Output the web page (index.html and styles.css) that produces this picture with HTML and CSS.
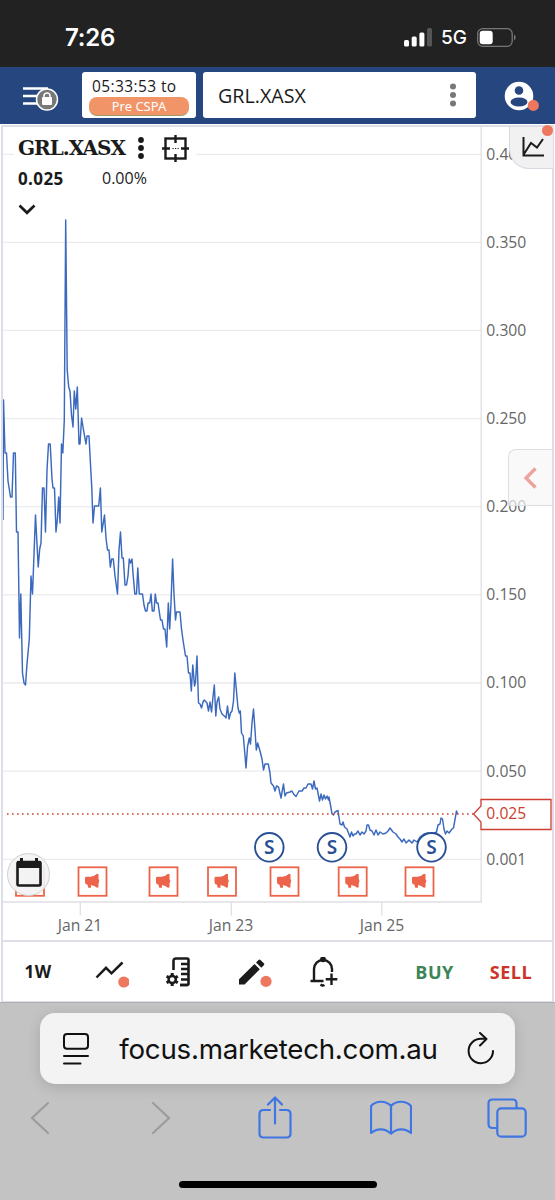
FILE: index.html
```
<!DOCTYPE html>
<html lang="en">
<head>
  <meta charset="utf-8">
  <title>GRL.XASX</title>
  <link rel="stylesheet" href="styles.css">
</head>
<body>
  <div class="phone">
    <div class="status-bar">
      <span class="clock">7:26</span>
      <div class="status-right">
        <svg width="29" height="19" viewBox="0 0 29 19">
          <rect x="0" y="12" width="5" height="6.500" rx="1.500" fill="#fff"/>
          <rect x="7.700" y="8.500" width="5" height="10" rx="1.500" fill="#fff"/>
          <rect x="15.400" y="4.500" width="5" height="14" rx="1.500" fill="#fff"/>
          <rect x="23" y="0" width="5" height="18.500" rx="1.500" fill="#555"/>
        </svg>
        <span class="network">5G</span>
        <svg class="battery" width="40" height="19" viewBox="0 0 40 19">
          <rect x=".7" y=".7" width="34.500" height="17.600" rx="5" fill="none" stroke="#777" stroke-width="1.300"/>
          <rect x="2.700" y="2.700" width="13" height="13.600" rx="3" fill="#fff"/>
          <path d="M37 6.500a3.500 3.500 0 0 1 0 6z" fill="#777"/>
        </svg>
      </div>
    </div>

    <div class="header">
      <svg class="menu" width="38" height="28" viewBox="0 0 38 28">
        <path d="M1 4.500h25M1 12h18M1 19.500h18" stroke="#fff" stroke-width="2.400"/>
        <circle cx="25" cy="15.500" r="10.500" fill="#77787a" stroke="#fff" stroke-width="1.500"/>
        <rect x="20" y="13" width="10" height="8" rx="1" fill="#fff"/>
        <path d="M22 13.500V12a3 3 0 0 1 6 0v1.500" fill="none" stroke="#fff" stroke-width="1.500"/>
      </svg>
      <div class="session">
        <span class="countdown">05:33:53 to</span>
        <span class="phase">Pre CSPA</span>
      </div>
      <div class="search">
        <span>GRL.XASX</span>
        <svg width="6" height="24" viewBox="0 0 6 24" fill="#77787a">
          <circle cx="3" cy="3.500" r="3"/><circle cx="3" cy="12" r="3"/><circle cx="3" cy="20.500" r="3"/>
        </svg>
      </div>
      <svg class="account" width="36" height="32" viewBox="0 0 36 32">
        <circle cx="15" cy="17" r="14.300" fill="#fff"/>
        <circle cx="15" cy="11.500" r="4.300" fill="#25467f"/>
        <ellipse cx="15" cy="23" rx="8.500" ry="4.600" fill="#25467f"/>
        <circle cx="29.300" cy="26.400" r="5.600" fill="#ee775f"/>
      </svg>
    </div>

    <div class="panel">
      <div class="chart">
        <svg class="plot" width="549" height="813" viewBox="3 127 549 813">
          <defs>
            <g id="news">
              <rect x="-14" y="-14" width="28" height="28.500" fill="#fff" stroke="#ec654b" stroke-width="1.800"/>
              <path d="M-7.500-3.500Q-7.500-4.500-6-4.500H-2Q2-5 4.500-7.500L6-7V-2.500Q7.800 0 6 2.200V6L4.500 6.500Q2 4.300-1.500 3.800V6.500H-4.300L-5 3.500Q-7.500 3-7.500 1z" fill="#ec654b"/>
            </g>
            <g id="split">
              <circle r="14.300" fill="#fff" stroke="#294f94" stroke-width="1.900"/>
              <text y="7" class="split-text">S</text>
            </g>
          </defs>
          <g stroke="#ececee" stroke-width="1.300">
            <path d="M3 154.300h478M3 242.300h478M3 330.400h478M3 418.600h478M3 506.700h478M3 594.800h478M3 683h478M3 771.200h478M3 859.400h478"/>
          </g>
          <path d="M481.200 127V902H3M80.300 902v13.500M231.300 902v13.500M381.800 902v13.500" fill="none" stroke="#dfdfe5" stroke-width="1.300"/>
          <g class="axis">
            <text x="486.300" y="159.500">0.400</text>
            <text x="486.300" y="247.500">0.350</text>
            <text x="486.300" y="335.500">0.300</text>
            <text x="486.300" y="424">0.250</text>
            <text x="486.300" y="512">0.200</text>
            <text x="486.300" y="600">0.150</text>
            <text x="486.300" y="688.300">0.100</text>
            <text x="486.300" y="776.500">0.050</text>
            <text x="486.300" y="864.500">0.001</text>
            <text x="80" y="931.300" text-anchor="middle">Jan 21</text>
            <text x="231" y="931.300" text-anchor="middle">Jan 23</text>
            <text x="382" y="931.300" text-anchor="middle">Jan 25</text>
          </g>
          <polyline fill="none" stroke="#3b69bd" stroke-width="1.450" stroke-linejoin="round" points="
            3,520 3.500,400 5,453 6.500,453 8,481 10.500,497 12,497 13.500,453 15.300,453 16.500,532 18,532 19.500,638 20.800,594 22.500,673 24,683 25.500,685
            27,664 29.300,639 31,576 32.500,594 35.500,515 38.200,567 39.700,549 41,543 42.500,488 44,488 45.500,532 47,470 48.500,444 50.200,444 52,479
            53,488 54.500,488 56,532 57.300,520 58.700,497 60,523 61.500,444 62.800,453 64.300,420 65.700,220 67.200,370 68.700,387 70,391 71.500,415
            73,427 74.300,391 75.800,409 77.300,387 79,444 80,444 81.600,418 83,427 86,444 87,436 89,436 90.700,468 91.800,488 93,523 94.500,506
            98.700,506 100.400,488 101.800,532 104.500,515 106,538 107.500,550 109,550 110.300,567 111.700,559 113.300,559 115,576 117.500,594
            119,550 120.500,532 122,558 123.300,558 125,585 126.500,585 128,576 129.300,559 130.500,563 132,559 133,573 134.800,594 136.500,594
            137.800,568 139.300,594 142.500,594 144,605 145.500,611 147,611 148,603 149.700,603 151,594 152.300,611 154,611 155.300,594 156.500,603
            158,603 160.500,620 162,620 163.500,629 165,629 166.700,647 168.300,603 169.700,629 171,603 172.600,559 174,594 175.500,620 176.500,612
            180,612 181.500,629 183,640 185.500,656 187,656 188.500,673 190,673 191.300,691 192.800,665 194.500,686 195.500,682 197,656 198.500,703
            200,704 201.500,708 203,702 204.300,700 207,703 208.500,711 210,702 211.500,712 213,697 214.300,685 215.800,716 217,702 218.700,697
            220,709 222,714 225.500,717 226,718 227.500,706 229,719 230.500,713 232,711 233.500,701 234.800,673 236,686 238,708 239.300,713
            240.300,711 241.500,733 243.300,736 244.700,752 246,768 247.500,747 249.300,738 250.500,744 252,723 253.500,709 255,730 256.300,750
            257.700,743 260,751 262,759 263.500,770 265,764 268.300,764 270,773 271,783 273.500,786 275,791 276.500,786 278.500,787 281,798
            283.500,784 285,796 286.500,793 290,792 292,791 293.500,794 296,796.500 299,791 302,791 304,788 306,788 308,784 311,784 312.500,789
            314,781 315.500,789 317,788 319.500,801 321,794 322.500,800 324,795 325.500,799 327,796 328.500,800 329,797 331,808 332,814 333.500,815
            335,812 338,810.500 340,824 342,825 343,822 344.500,827 347,829 350,837 351.500,832 353,836 354.500,834 356,834 358,831 360,835
            362,832 364,834 366,831 367,825 368.500,825 370,830 372,831 374,835 376,830 378,835 380,832 383,834 386,833 388,831 390,828
            393,832 396,834 398,837 400,839 402,842 404,839 406,843 409,840 412,843 414,840 417,842 420,837 424,834 428,833 432,834
            436.500,832 438,825 440,824 441,818 442.500,819 444,829 445.500,834 447,831 449,833 452,829 453.500,828 456.500,811 457.500,814"/>
          <path d="M7 814h466" stroke="#cd3d30" stroke-width="1.500" stroke-dasharray="1.600 3.400"/>
          <path d="M551 799.500H481V806L473.500 814 481 822V829.500H551z" fill="#fff" stroke="#cd3d30" stroke-width="1.300"/>
          <text class="axis last" x="486.300" y="819.300">0.025</text>
          <use href="#split" x="269.300" y="847.300"/>
          <use href="#split" x="332" y="847.300"/>
          <use href="#split" x="431.500" y="847.300"/>
          <use href="#news" x="30" y="881.300"/>
          <use href="#news" x="92.500" y="881.300"/>
          <use href="#news" x="163.500" y="881.300"/>
          <use href="#news" x="222" y="881.300"/>
          <use href="#news" x="284.500" y="881.300"/>
          <use href="#news" x="352.700" y="881.300"/>
          <use href="#news" x="419.500" y="881.300"/>
        </svg>

        <div class="legend">
          <div class="legend-row">
            <span class="symbol">GRL.XASX</span>
            <svg width="6" height="22" viewBox="0 0 6 22" fill="#1b1b1b">
              <circle cx="3" cy="3" r="2.900"/><circle cx="3" cy="11" r="2.900"/><circle cx="3" cy="19" r="2.900"/>
            </svg>
            <svg class="target" width="27" height="27" viewBox="0 0 27 27" fill="none" stroke="#1b1b1b" stroke-width="2.400">
              <rect x="3.500" y="3.500" width="20" height="20"/>
              <path d="M13.500 0v8M13.500 19v8M0 13.500h8M19 13.500h8"/>
              <path d="M10.500 13.500h1.200M13 13.500h1.200M15.500 13.500h1.200" stroke-width="1.200"/>
            </svg>
          </div>
          <div class="quote">
            <span class="price">0.025</span>
            <span class="change">0.00%</span>
          </div>
          <svg class="expand" width="18" height="12" viewBox="0 0 18 12" fill="none" stroke="#1b1b1b" stroke-width="2.700">
            <path d="M1.500 1.500L9 8.800l7.500-7.300"/>
          </svg>
        </div>

        <div class="chart-tab">
          <svg width="23" height="22" viewBox="0 0 23 22" fill="none" stroke="#1b1b1b" stroke-width="2">
            <path d="M1.500 1v18.500H22M2 18l7-11 6 4.500L21 3"/>
          </svg>
          <span class="dot"></span>
        </div>
        <div class="drawer-tab">
          <svg width="14" height="22" viewBox="0 0 14 22" fill="none" stroke="#efa29b" stroke-width="3.300">
            <path d="M12.500 1.500L3 11l9.500 9.500"/>
          </svg>
        </div>
        <div class="calendar">
          <svg width="26" height="29" viewBox="0 0 26 29">
            <path d="M5.500 0v5M20.500 0v5" stroke="#1b1b1b" stroke-width="3"/>
            <rect x="1.500" y="4" width="23" height="23.500" rx="1.500" fill="#f3f3f3" stroke="#1b1b1b" stroke-width="2.600"/>
            <path d="M1 3h24v7H1z" fill="#1b1b1b"/>
          </svg>
        </div>
      </div>

      <div class="toolbar">
        <div class="tool interval">1W</div>
        <div class="tool">
          <svg width="34" height="32" viewBox="0 0 34 32">
            <path d="M1.500 21.500L11 11.800l5.500 5.500L27.500 6.500" fill="none" stroke="#1b1b1b" stroke-width="2.500"/>
            <circle cx="28.800" cy="26" r="5.600" fill="#ee775f"/>
          </svg>
        </div>
        <div class="tool">
          <svg width="26" height="30" viewBox="0 0 26 30" fill="none" stroke="#1b1b1b">
            <path d="M8.500 13V4q0-2.500 2.500-2.500h11q1.500 0 1.500 1.500v23.500q0 1.500-1.500 1.500h-7" stroke-width="2.600"/>
            <path d="M16 7h7M16 12h7M16 17h7M16 22.500h7M15 28h8" stroke-width="2.300"/>
            <circle cx="7.200" cy="22.500" r="3.600" stroke-width="2.500"/>
            <path d="M7.200 16v3M7.200 26v3M1.600 19.200l2.600 1.500M10.200 24.300l2.600 1.500M1.600 25.800l2.600-1.500M10.200 20.700l2.600-1.500" stroke-width="3"/>
          </svg>
        </div>
        <div class="tool">
          <svg width="34" height="30" viewBox="0 0 34 30">
            <path d="M1 22.300L16.500 7l5.300 5.300L6.500 27.500H1zM18 5.500l2.500-2.500q1-1 2 0l3.300 3.300q1 1 0 2L23.300 10.800z" fill="#1b1b1b"/>
            <circle cx="28" cy="24.400" r="5.600" fill="#ee775f"/>
          </svg>
        </div>
        <div class="tool">
          <svg width="28" height="30" viewBox="0 0 28 30" fill="none" stroke="#1b1b1b" stroke-width="2.400">
            <path d="M.5 24h13M4 24V12a9 9 0 0 1 18 0v3M13 3V.8"/>
            <circle cx="13" cy="2.300" r="1.700"/>
            <path d="M21.500 16.500v11.500M15.700 22.300h11.600M10.500 27.500q2 1.800 4 .5"/>
          </svg>
        </div>
        <div class="tool buy">BUY</div>
        <div class="tool sell">SELL</div>
      </div>
    </div>

    <div class="browser">
      <div class="address">
        <svg width="28" height="34" viewBox="0 0 28 34" fill="none" stroke="#111" stroke-width="2" stroke-linecap="round">
          <rect x="2" y="2" width="24" height="14.800" rx="3"/>
          <path d="M2 24h24M2 31.500h16.500"/>
        </svg>
        <span class="url">focus.marketech.com.au</span>
        <svg width="28" height="34" viewBox="0 0 28 34" fill="none" stroke="#111" stroke-width="2" stroke-linecap="round" stroke-linejoin="round">
          <path d="M18.500 6.800H14A12.200 12.200 0 1 0 26 19"/>
          <path d="M13 1l6.500 6-6.500 6.500"/>
        </svg>
      </div>
      <div class="nav">
        <svg width="20" height="34" viewBox="0 0 20 34" fill="none" stroke="#9c9c9c" stroke-width="2.200" stroke-linecap="round"><path d="M18 2L2 17l16 15"/></svg>
        <svg width="20" height="34" viewBox="0 0 20 34" fill="none" stroke="#9c9c9c" stroke-width="2.200" stroke-linecap="round"><path d="M2 2l16 15L2 32"/></svg>
        <svg width="34" height="43" viewBox="0 0 34 43" fill="none" stroke="#3f76e4" stroke-width="2.200" stroke-linecap="round" stroke-linejoin="round">
          <path d="M12 14H5.500q-4 0-4 4v19.500q0 4 4 4h23q4 0 4-4V18q0-4-4-4H22M17 27.500V2M10 8.500L17 1.500l7 7"/>
        </svg>
        <svg width="42" height="35" viewBox="0 0 42 35" fill="none" stroke="#3f76e4" stroke-width="2.200" stroke-linejoin="round">
          <path d="M21 6C16 .3 6 .3 1 6v27c6-5 14-5 20 .7 6-5.700 14-5.700 20-.7V6C36 .3 26 .3 21 6zM21 6v27.500"/>
        </svg>
        <svg width="40" height="40" viewBox="0 0 40 40" fill="none" stroke="#3f76e4" stroke-width="2.200">
          <path d="M10 30H5.500q-4 0-4-4V5.500q0-4 4-4h20q4 0 4 4V10"/>
          <rect x="10.300" y="10.300" width="28.400" height="28.400" rx="4"/>
        </svg>
      </div>
      <div class="home-bar"></div>
    </div>
  </div>
</body>
</html>
```
FILE: styles.css
```
* {
  box-sizing: border-box;
}
body {
  margin: 0;
  font-family: "Noto Sans", "Open Sans", sans-serif;
  color: #1b1b1b;
}
svg {
  display: block;
  flex-shrink: 0;
}
.phone {
  width: 555px;
  height: 1200px;
  overflow: hidden;
  background: #fff;
}
.status-bar {
  height: 67px;
  padding: 7px 38px 0 65px;
  background: #222;
  color: #fff;
  display: flex;
  justify-content: space-between;
  align-items: center;
  font-family: Inter, sans-serif;
}
.clock {
  font-size: 24px;
  font-weight: 600;
  letter-spacing: -0.2px;
}
.status-right {
  display: flex;
  align-items: center;
}
.network {
  margin: 0 10px 0 8px;
  font-size: 19px;
  font-weight: 500;
}

/* top navigation */
.header {
  height: 57px;
  padding: 0 13px 1px 22px;
  background: #25467f;
  display: flex;
  align-items: center;
}
.menu {
  margin-top: 5px;
}
.session {
  width: 114px;
  height: 46px;
  margin: 0 7px 0 22px;
  padding: 3px 7px;
  background: #fff;
  border-radius: 3px;
}
.countdown {
  display: block;
  padding-left: 3px;
  font-family: "Open Sans", sans-serif;
  font-size: 15.500px;
  line-height: 22px;
  letter-spacing: 0.4px;
  white-space: nowrap;
}
.phase {
  display: block;
  height: 19px;
  border-radius: 8px;
  border-bottom: 1px solid #9c9b68;
  background: #f19467;
  color: #fff;
  font-size: 13px;
  line-height: 19px;
  text-align: center;
}
.search {
  width: 273px;
  height: 46px;
  padding: 0 20px 0 15px;
  background: #fff;
  border-radius: 3px;
  font-family: "Open Sans", sans-serif;
  font-size: 19.700px;
  display: flex;
  align-items: center;
  justify-content: space-between;
}
.account {
  margin-left: 28px;
}

/* chart */
.panel {
  width: 553px;
  height: 877px;
  margin: 1px 0 0 1px;
  border: 2px solid #dddee7;
  border-bottom-width: 1px;
}
.chart {
  position: relative;
  height: 813px;
}
.axis {
  font-family: "Open Sans", sans-serif;
  font-size: 15.700px;
  fill: #666;
}
.last {
  fill: #cd3d30;
}
.split-text {
  font-size: 19px;
  font-weight: 600;
  fill: #294f94;
  text-anchor: middle;
}
.legend {
  position: absolute;
  top: 6px;
  left: 0;
  padding-left: 15px;
}
.legend-row {
  height: 30px;
  padding-right: 7px;
  margin-left: -4px;
  padding-left: 4px;
  background: #fff;
  display: flex;
  align-items: center;
}
.symbol {
  width: 120px;
  font-family: "DejaVu Serif", serif;
  font-size: 20px;
  font-weight: bold;
  letter-spacing: -1px;
}
.target {
  margin-left: 18px;
}
.quote {
  display: flex;
  align-items: center;
  height: 30px;
  font-family: "Open Sans", sans-serif;
}
.price {
  width: 84px;
  font-size: 17px;
  font-weight: 700;
  letter-spacing: 0.4px;
}
.change {
  font-size: 16px;
}
.expand {
  margin-top: 11px;
}
.chart-tab {
  position: absolute;
  top: 0;
  right: -1px;
  width: 44px;
  height: 42px;
  padding: 9px 0 0 12px;
  border: 1px solid #d9dae1;
  border-width: 0 0 1px 1px;
  border-bottom-left-radius: 20px;
  background: #f1f1f2;
}
.dot {
  position: absolute;
  top: -2px;
  right: 0;
  width: 11px;
  height: 11px;
  border-radius: 50%;
  background: #ee775f;
}
.drawer-tab {
  position: absolute;
  top: 322px;
  right: 0;
  width: 44px;
  height: 57px;
  padding-left: 14px;
  border: 1px solid #dfdfe2;
  border-right: 0;
  border-radius: 8px 0 0 0;
  background: rgba(246, 246, 246, 0.7);
  display: flex;
  align-items: center;
}
.calendar {
  position: absolute;
  top: 726px;
  left: 4px;
  width: 43px;
  height: 43px;
  border: 1px solid #cfcfcf;
  border-radius: 50%;
  background: rgba(243, 243, 243, 0.93);
  display: flex;
  align-items: center;
  justify-content: center;
}
.calendar svg {
  margin-top: -4px;
}

.toolbar {
  height: 61px;
  border-top: 2px solid #dddee7;
  display: grid;
  grid-template-columns: 70px 78px 53px 101px 38px 183px 26px;
  align-items: center;
  font-family: "Open Sans", sans-serif;
  font-size: 18px;
  font-weight: 700;
}
.tool {
  display: flex;
  justify-content: center;
}
.interval {
  font-size: 17px;
  letter-spacing: 0.5px;
}
.buy {
  letter-spacing: 0.5px;
  color: #3b8556;
}
.sell {
  width: 42px;
  margin-left: -36px;
  letter-spacing: 0.5px;
  color: #cc3526;
}

/* mobile browser controls */
.browser {
  height: 198px;
  padding-top: 10px;
  background: #c3c3c3;
  border-top: 1px solid #adb0b5;
}
.address {
  width: 475px;
  height: 71px;
  margin: 0 auto;
  padding: 0 20px 0 22px;
  border-radius: 15px;
  background: #f3f3f3;
  box-shadow: 0 3px 14px rgba(0, 0, 0, 0.14);
  display: flex;
  align-items: center;
  justify-content: space-between;
}
.url {
  font-family: Inter, sans-serif;
  font-size: 27.700px;
  letter-spacing: -0.25px;
  color: #111;
}
.nav {
  height: 67px;
  display: grid;
  grid-template-columns: 80px 162px 66px 166px 66px;
  align-items: center;
  justify-items: center;
}
.home-bar {
  width: 198px;
  height: 7px;
  margin: 30px auto 0;
  border-radius: 4px;
  background: #000;
}
```
